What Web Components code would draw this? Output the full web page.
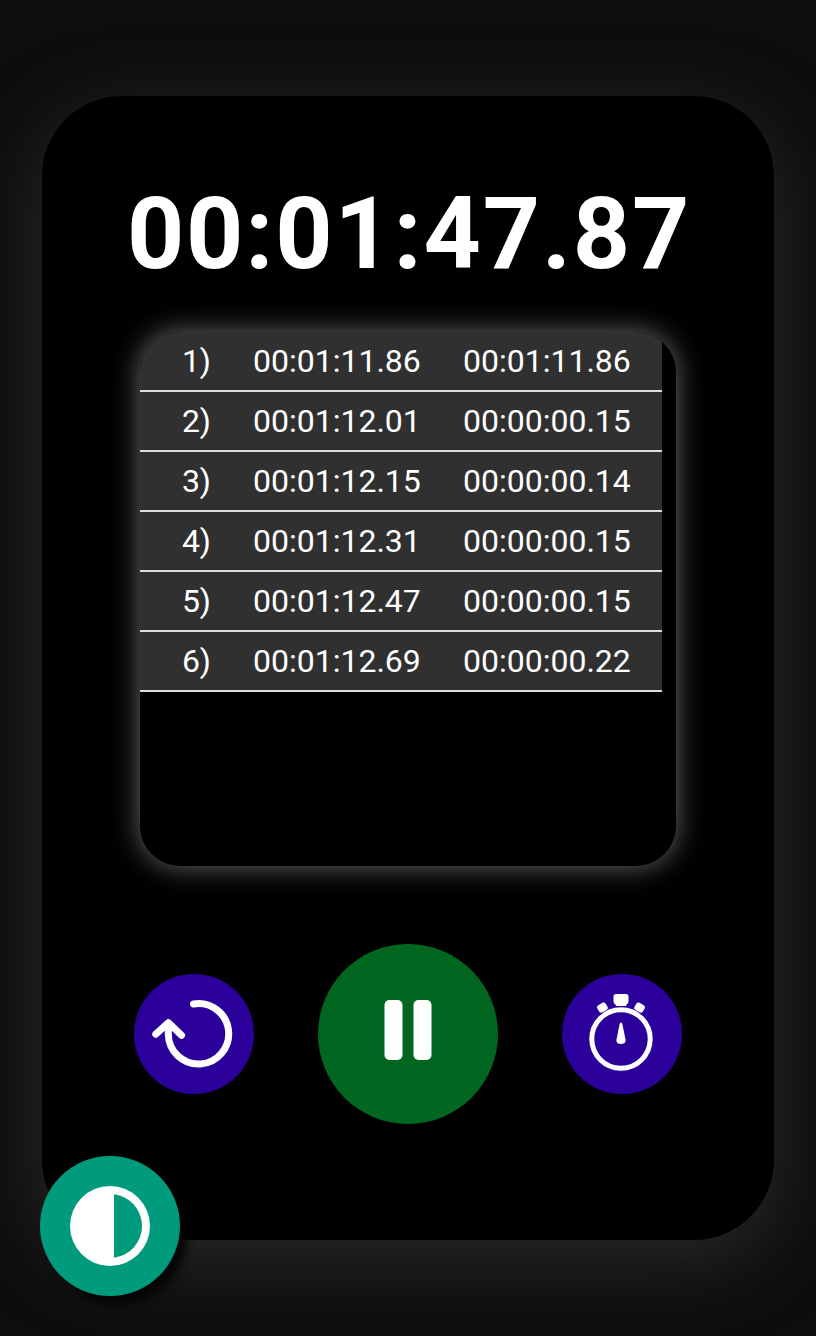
<!DOCTYPE html>
<html lang="en">
<head>
<meta charset="utf-8">
<title>Stopwatch</title>
<style>
html,body{margin:0;background:#0e0e0e;font-family:Roboto,"Liberation Sans",sans-serif;color:#fff}
body{height:1336px;overflow:hidden}
</style>
</head>
<body>
<stop-watch></stop-watch>
<script>
const define = (name, html, after) => customElements.define(name, class extends HTMLElement {
  connectedCallback() {
    if (this.shadowRoot) return;
    const root = this.attachShadow({ mode: 'open' });
    root.innerHTML = html;
    if (after) after(this, root);
  }
});

define('time-display', `<style>
:host{display:block;padding-left:2px;font-size:100px;font-weight:700;line-height:118px;letter-spacing:1.8px;text-align:center;white-space:nowrap}
</style><slot></slot>`);

define('lap-row', `<style>
:host{display:grid;grid-template-columns:71px 168px 168px;column-gap:42px;height:58px;line-height:58px;font-size:32px;background:#303030;border-bottom:2px solid #ddd;white-space:nowrap}
.n{text-align:right}
</style><span class="n"><slot name="n"></slot></span><span><slot name="total"></slot></span><span><slot name="split"></slot></span>`);

define('lap-list', `<style>
:host{display:block;box-sizing:border-box;width:536px;height:534px;padding-right:14px;border-radius:40px;overflow:hidden;background:#000;box-shadow:0 0 28px #696969}
</style><slot></slot>`);

define('round-button', `<style>
:host{display:flex;align-items:center;justify-content:center;width:var(--size,120px);height:var(--size,120px);border-radius:50%;background:var(--fill,#2b009b)}
::slotted(svg){display:block;width:100%;height:100%}
</style><slot></slot>`);

define('stop-watch', `<style>
:host{display:block;padding:96px 42px}
main{box-sizing:border-box;height:1144px;padding-top:79px;border-radius:80px;background:#000;box-shadow:0 20px 80px #2a2a2a;display:flex;flex-direction:column;align-items:center}
lap-list{margin-top:39px}
nav{margin-top:78px;display:flex;align-items:center;gap:64px}
.play{--size:180px;--fill:#006620}
.theme{--size:140px;--fill:#009a7c;position:fixed;left:40px;bottom:40px;box-shadow:8px 8px 10px rgba(0,0,0,.8)}
</style>
<main>
<time-display>00:01:47.87</time-display>
<lap-list></lap-list>
<nav>
<round-button><svg viewBox="0 0 120 120" fill="none" stroke="#fff" stroke-width="7" stroke-linecap="round" stroke-linejoin="round"><path d="M59.5 30A30.2 30.2 0 1 1 34.300 60L34.300 50M21.800 60.2L34.500 48.7L47.5 61.2"/></svg></round-button>
<round-button class="play"><svg viewBox="0 0 180 180" fill="#fff"><rect x="66.5" y="56" width="18" height="60" rx="5"/><rect x="95.5" y="56" width="18" height="60" rx="5"/></svg></round-button>
<round-button><svg viewBox="0 0 120 120" fill="#fff"><circle cx="59" cy="65" r="29.2" fill="none" stroke="#fff" stroke-width="5"/><path d="M54 20H64Q66.5 20 66.5 22.5V27.500Q66.5 29.5 64.500 30.5L64 32H54L53.5 30.5Q51.5 29.5 51.5 27.500V22.5Q51.5 20 54 20ZM59 48.500Q60 48.500 60.5 50.500L63.5 65.500Q64.3 70 59 70Q53.7 70 54.5 65.500L57.500 50.500Q58 48.500 59 48.500Z"/><rect x="35.700" y="29.500" width="9.600" height="8.200" rx="2.500" transform="rotate(-31 40.400 33.700)"/><rect x="72.700" y="29.500" width="9.600" height="8.200" rx="2.500" transform="rotate(31 77.600 33.700)"/></svg></round-button>
</nav>
</main>
<round-button class="theme"><svg viewBox="0 0 140 140"><circle cx="70" cy="70" r="40" fill="#fff"/><path d="M74 38.250A32 32 0 0 1 74 101.750Z" fill="#009a7c"/></svg></round-button>`, (host, root) => {
  const laps = [['00:01:11.86','00:01:11.86'],['00:01:12.01','00:00:00.15'],['00:01:12.15','00:00:00.14'],['00:01:12.31','00:00:00.15'],['00:01:12.47','00:00:00.15'],['00:01:12.69','00:00:00.22']];
  root.querySelector('lap-list').innerHTML = laps.map(([t, s], i) => `<lap-row><span slot="n">${i + 1})</span><span slot="total">${t}</span><span slot="split">${s}</span></lap-row>`).join('');
});
</script>
</body>
</html>
